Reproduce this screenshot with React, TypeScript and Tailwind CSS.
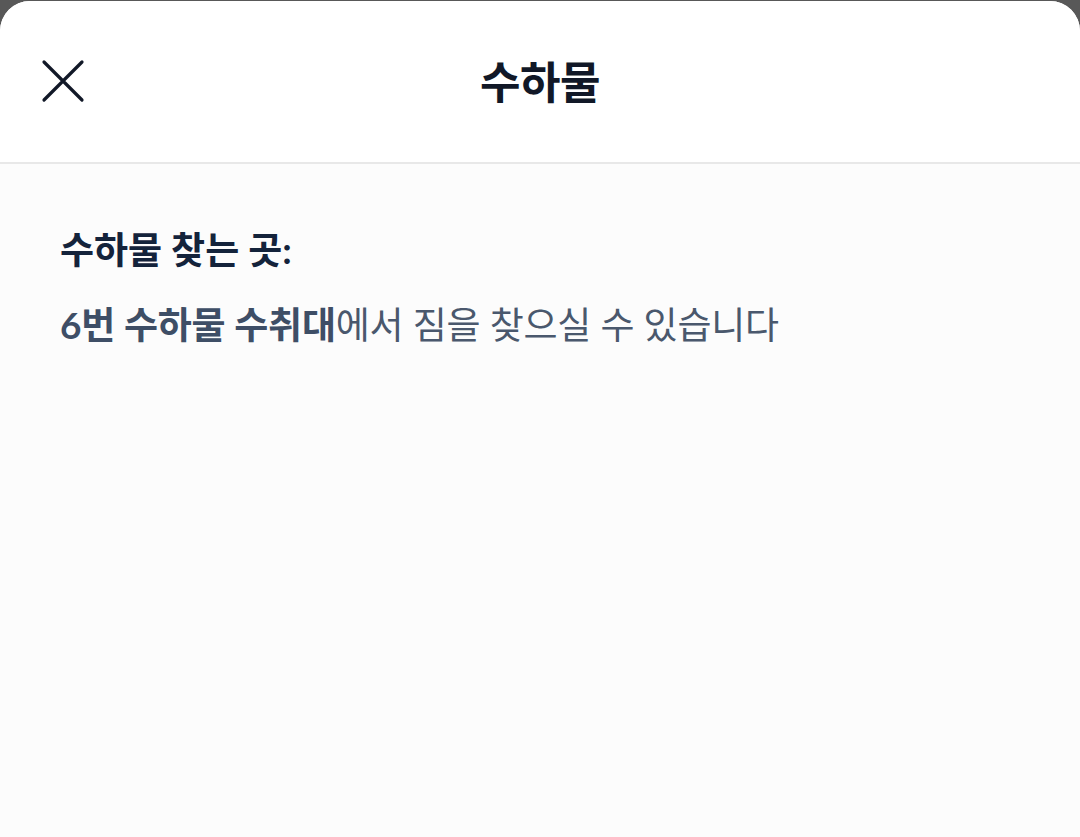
const font = "font-['Lato','Noto_Sans_CJK_KR',sans-serif]"

const CloseIcon = () => (
  <svg width="44" height="44" viewBox="0 0 44 44" fill="none">
    <path
      d="M3 3L41 41M41 3L3 41"
      stroke="#111827"
      strokeWidth="3.2"
      strokeLinecap="round"
    />
  </svg>
)

export default function App() {
  return (
    <div className={`h-[837px] w-[1080px] overflow-hidden bg-[#585858] pt-px ${font}`}>
      <div className="flex h-full flex-col overflow-hidden rounded-t-[30px] bg-[#fcfcfc]">
        {/* header */}
        <div className="relative flex h-[163px] shrink-0 items-center justify-center border-b-2 border-[#e8e8e8] bg-white">
          <button className="absolute left-[41px] top-[58px]">
            <CloseIcon />
          </button>
          <h1 className="text-[44px] font-bold leading-none tracking-[-0.5px] text-[#111827]">
            수하물
          </h1>
        </div>

        {/* content */}
        <div className="px-[60px] pt-[62px]">
          <h2 className="text-[37px] font-bold leading-[48px] tracking-[0px] text-[#14233b]">
            수하물 찾는 곳:
          </h2>
          <p className="mt-[27px] text-[37px] leading-[48px] tracking-[-0.2px] text-[#4a586d]">
            <span className="font-bold text-[#3e4e66]">6번 수하물 수취대</span>
            에서 짐을 찾으실 수 있습니다
          </p>
        </div>
      </div>
    </div>
  )
}
